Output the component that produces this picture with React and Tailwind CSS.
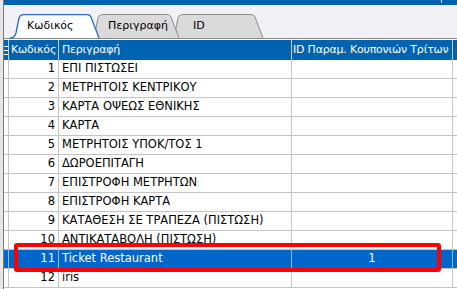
import React from "react";

const rows = [
  { code: 1, name: "ΕΠΙ ΠΙΣΤΩΣΕΙ" },
  { code: 2, name: "ΜΕΤΡΗΤΟΙΣ ΚΕΝΤΡΙΚΟΥ" },
  { code: 3, name: "ΚΑΡΤΑ ΟΨΕΩΣ ΕΘΝΙΚΗΣ" },
  { code: 4, name: "ΚΑΡΤΑ" },
  { code: 5, name: "ΜΕΤΡΗΤΟΙΣ ΥΠΟΚ/ΤΟΣ 1" },
  { code: 6, name: "ΔΩΡΟΕΠΙΤΑΓΗ" },
  { code: 7, name: "ΕΠΙΣΤΡΟΦΗ ΜΕΤΡΗΤΩΝ" },
  { code: 8, name: "ΕΠΙΣΤΡΟΦΗ ΚΑΡΤΑ" },
  { code: 9, name: "ΚΑΤΑΘΕΣΗ ΣΕ ΤΡΑΠΕΖΑ (ΠΙΣΤΩΣΗ)" },
  { code: 10, name: "ΑΝΤΙΚΑΤΑΒΟΛΗ (ΠΙΣΤΩΣΗ)" },
  { code: 11, name: "Ticket Restaurant", coupon: "1", selected: true },
  { code: 12, name: "iris" },
];

const tabPath = (w) =>
  `M0,24 C3,24 5,23 6,19 L9,4 Q10,0.5 14,0.5 L${w - 13},0.5 Q${w - 10},0.5 ${w - 9},3 L${w - 1},24`;

// tab shape drawn in svg, label is real text on top
const Tab = ({ label, width, active, className, z }) => (
  <div className={`relative h-[24px] shrink-0 ${className} ${z}`} style={{ width }}>
    <svg className="absolute inset-0" width={width} height="25" viewBox={`0 0 ${width} 25`}>
      <path d={tabPath(width) + " Z"} fill={active ? "#ffffff" : "#dadada"} stroke="none" />
      <path
        d={tabPath(width)}
        fill="none"
        stroke={active ? "#2a6db5" : "#8c8c8c"}
        strokeWidth={active ? 1.3 : 1}
      />
    </svg>
    <div className="relative flex h-full items-center pt-[1px] text-[11px] text-black">
      {label}
    </div>
  </div>
);

export default function App() {
  return (
    <div
      className="relative flex h-[289px] w-[457px] overflow-hidden bg-white"
      style={{ fontFamily: '"DejaVu Sans", "Liberation Sans", sans-serif' }}
    >
      {/* left splitter */}
      <div className="box-content w-[3px] shrink-0 border-r border-[#7a7a7a] bg-[#e6e6e6]" />

      <div className="flex min-w-0 flex-1 flex-col">
        {/* top bar */}
        <div className="flex h-[5px] shrink-0 bg-[#0063b1]">
          <div className="w-[437px] shrink-0" />
          <div className="h-[3px] w-px bg-white" />
        </div>

        {/* tabs strip */}
        <div className="flex h-[34px] shrink-0 items-end border-b border-[#8a8a8a] bg-[#f1f1f6] pl-[6px]">
          <Tab label="Κωδικός" width={90} active z="z-30" className="[&>div]:pl-[17px]" />
          <Tab label="Περιγραφή" width={91} z="z-20" className="-ml-[11px] [&>div]:pl-[19px]" />
          <Tab label="ID" width={95} z="z-10" className="-ml-[11px] [&>div]:pl-[24px]" />
        </div>

        <div className="h-px shrink-0 bg-white" />

        {/* header */}
        <div className="flex h-[20px] shrink-0 bg-[#0063b1] text-[11px] tracking-[-0.2px] text-white">
          <div className="flex w-[5px] shrink-0 flex-col justify-center gap-[3px] border-r border-[#c5cfdc]">
            <div className="h-px bg-white" />
            <div className="h-px bg-white" />
            <div className="h-px bg-white" />
          </div>
          <div className="flex w-[50px] shrink-0 items-center overflow-hidden whitespace-nowrap border-r border-[#c5cfdc] pl-[2px]">
            Κωδικός
          </div>
          <div className="flex w-[233px] shrink-0 items-center border-r border-[#c5cfdc] pl-[3px]">
            Περιγραφή
          </div>
          <div className="flex w-[161px] shrink-0 items-center overflow-hidden whitespace-nowrap border-r border-[#c5cfdc] pl-[1px]">
            ID Παραμ. Κουπονιών Τρίτων
          </div>
          <div className="flex-1" />
        </div>

        {/* rows */}
        {rows.map((r) => {
          const sel = r.selected;
          const line = sel ? "border-[#9ab9dc]" : "border-[#c4c4c4]";
          return (
            <div
              key={r.code}
              className={`flex h-[19px] shrink-0 border-b border-[#c4c4c4] text-[11.5px] ${
                sel ? "bg-[#0066cc] text-white" : "bg-white text-black"
              }`}
            >
              <div className={`w-[5px] shrink-0 border-r ${line}`} />
              <div className={`flex w-[50px] shrink-0 items-center justify-end border-r pr-[3px] ${line}`}>
                {r.code}
              </div>
              <div className={`flex w-[233px] shrink-0 items-center overflow-hidden whitespace-nowrap border-r pl-[3px] ${line}`}>
                {r.name}
              </div>
              <div className={`flex w-[161px] shrink-0 items-center justify-center border-r ${line}`}>
                {r.coupon}
              </div>
              <div className="flex-1" />
            </div>
          );
        })}
      </div>

      {/* red highlight drawn over the selected row */}
      <div className="pointer-events-none absolute left-[14px] top-[243px] h-[29px] w-[427px] rounded-[3px] border-[4px] border-[#ff0000]" />
    </div>
  );
}
